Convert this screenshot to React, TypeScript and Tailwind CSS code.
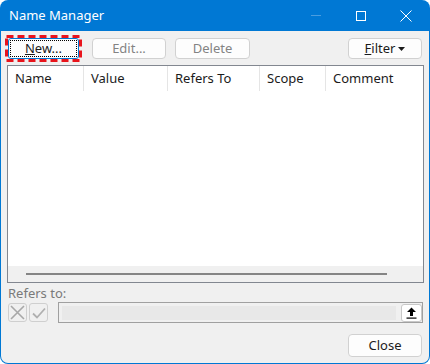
import React from "react";

const font = { fontFamily: '"Noto Sans", "Segoe UI", Arial, sans-serif' };

function Btn({
  children,
  disabled,
  className = "",
}: {
  children: React.ReactNode;
  disabled?: boolean;
  className?: string;
}) {
  return (
    <div
      className={`flex items-center justify-center rounded-[4px] border border-[#d1d1d1] bg-[#fdfdfd] text-[13px] ${
        disabled ? "text-[#838383]" : "text-[#1b1b1b]"
      } ${className}`}
    >
      {children}
    </div>
  );
}

const columns = [
  { label: "Name", w: "w-[76px]" },
  { label: "Value", w: "w-[84px]" },
  { label: "Refers To", w: "w-[92px]" },
  { label: "Scope", w: "w-[66px]" },
  { label: "Comment", w: "flex-1" },
];

export default function App() {
  return (
    <div className="h-[364px] w-[430px] bg-white" style={font}>
      <div className="flex h-[364px] w-[430px] flex-col overflow-hidden rounded-[8px] bg-[#0078d4] px-[1px] pb-[1px]">
        {/* title bar */}
        <div className="flex h-[31px] shrink-0 items-center text-white">
          <span className="ml-[8px] text-[13px]">Name Manager</span>
          <div className="ml-auto flex h-full items-center">
            <div className="flex h-full w-[46px] items-center justify-center">
              <div className="h-[1px] w-[10px] bg-[#4a9de0]" />
            </div>
            <div className="flex h-full w-[44px] items-center justify-center">
              <div className="h-[10px] w-[10px] border border-white" />
            </div>
            <div className="flex h-full w-[46px] items-center justify-center">
              <svg width="12" height="12" viewBox="0 0 12 12">
                <path d="M0.5 0.5 L11.5 11.5 M11.5 0.5 L0.5 11.5" stroke="white" strokeWidth="1" />
              </svg>
            </div>
          </div>
        </div>

        {/* body */}
        <div className="flex flex-1 flex-col rounded-b-[7px] bg-[#f0f0f0]">
          {/* toolbar */}
          <div className="mt-[4px] flex items-center">
            <div className="relative ml-[4px] flex h-[27px] w-[77px] items-center justify-center">
              <div className="flex h-[21px] w-[71px] items-center justify-center rounded-[3px] border border-[#0078d4] bg-[#fdfdfd] p-[1px]">
                <div className="flex h-full w-full items-center justify-center border border-dotted border-black text-[13px] text-[#1b1b1b]">
                  <span>
                    <span className="underline">N</span>ew...
                  </span>
                </div>
              </div>
              {/* annotation highlight */}
              <svg className="pointer-events-none absolute inset-0" width="77" height="27" viewBox="0 0 77 27">
                <rect
                  x="1.5"
                  y="1.5"
                  width="74"
                  height="24"
                  fill="none"
                  stroke="#e8141c"
                  strokeWidth="3"
                  strokeDasharray="7 4"
                />
              </svg>
            </div>
            <Btn disabled className="ml-[10px] h-[21px] w-[74px]">
              Edit...
            </Btn>
            <Btn disabled className="ml-[9px] h-[21px] w-[75px]">
              Delete
            </Btn>
            <Btn className="ml-auto mr-[7px] h-[21px] w-[74px]">
              <span>
                <span className="underline">F</span>ilter
              </span>
              <svg width="7" height="4" viewBox="0 0 7 4" className="ml-[3px]">
                <path d="M0 0 H7 L3.5 4 Z" fill="#1b1b1b" />
              </svg>
            </Btn>
          </div>

          {/* list */}
          <div className="ml-[6px] mt-[3px] flex h-[218px] w-[417px] flex-col border border-[#828790] bg-white">
            <div className="flex h-[25px] text-[13px] text-[#1b1b1b]">
              {columns.map((c, i) => (
                <div
                  key={c.label}
                  className={`${c.w} flex items-center pl-[7px] ${
                    i < columns.length - 1 ? "border-r border-[#e5e5e5]" : ""
                  }`}
                >
                  {c.label}
                </div>
              ))}
            </div>
            <div className="flex-1" />
            <div className="flex h-[16px] items-center bg-[#f0f0f0]">
              <div className="ml-[18px] h-[2px] w-[361px] bg-[#858585]" />
            </div>
          </div>

          {/* refers to */}
          <div className="ml-[7px] mt-[1px] text-[13px] leading-[18px] text-[#7a7a7a]">Refers to:</div>
          <div className="flex items-center">
            <div className="ml-[7px] flex h-[19px] w-[19px] items-center justify-center rounded-[3px] border border-[#cfcfcf] bg-[#f0f0f0]">
              <svg width="15" height="15" viewBox="0 0 15 15">
                <path d="M1 1 L14 14 M14 1 L1 14" stroke="#a8a8a8" strokeWidth="1.6" />
              </svg>
            </div>
            <div className="ml-[2px] flex h-[19px] w-[19px] items-center justify-center rounded-[3px] border border-[#cfcfcf] bg-[#f0f0f0]">
              <svg width="14" height="12" viewBox="0 0 14 12">
                <path d="M1 6.5 L5 10.5 L13 1.5" stroke="#b0b0b0" strokeWidth="1.8" fill="none" />
              </svg>
            </div>
            <div className="ml-[10px] flex h-[21px] w-[365px] items-center border border-[#a0a0a0] bg-[#f0f0f0] pl-[3px]">
              <div className="h-[14px] w-[334px] bg-[#e8e8e8]" />
              <div className="ml-[5px] flex h-[18px] w-[21px] items-center justify-center rounded-[3px] border border-[#c8c8c8] bg-white">
                <svg width="11" height="12" viewBox="0 0 11 12">
                  <path d="M5.5 0.5 L10 5 H7 V9 H4 V5 H1 Z" fill="#000" />
                  <rect x="0.5" y="10.5" width="10" height="1.2" fill="#000" />
                </svg>
              </div>
            </div>
          </div>

          {/* close */}
          <div className="mt-[11px] flex">
            <Btn className="ml-auto mr-[7px] h-[23px] w-[74px]">Close</Btn>
          </div>
        </div>
      </div>
    </div>
  );
}
